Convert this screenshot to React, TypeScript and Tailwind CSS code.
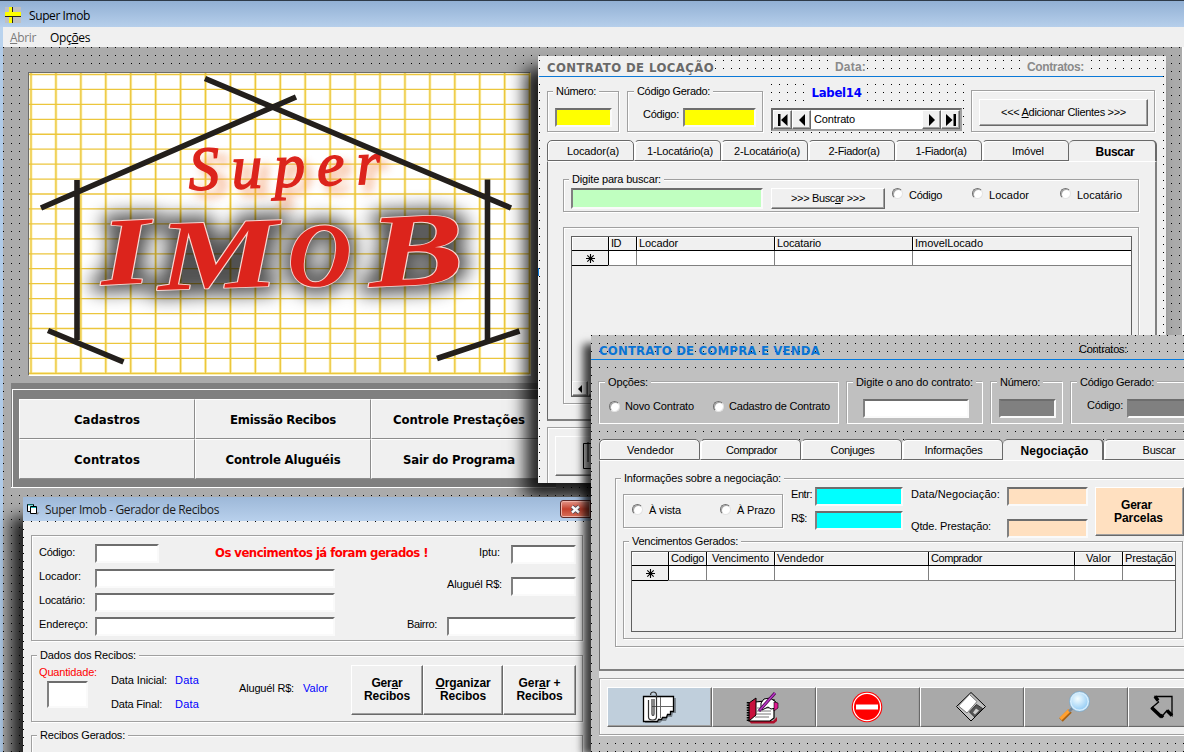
import { useLayoutEffect, useRef, useState, type ReactNode } from "react";

const SANS = "font-['Liberation_Sans',Arial,sans-serif]";
const TAHOMA = "font-['DejaVu_Sans_Condensed','DejaVu_Sans',sans-serif] [font-stretch:condensed] font-bold";
const SEGOE = "font-['Open_Sans','Noto_Sans',sans-serif]";
const DOTS =
  "bg-[conic-gradient(from_270deg_at_1px_1px,#000_90deg,transparent_0)] bg-size-[8px_8px]";

/* A label of fixed width: its letter spacing is adjusted so the caption fills it. */
function Txt({ w, className = "", children }: { w: number; className?: string; children: ReactNode }) {
  const ref = useRef<HTMLSpanElement>(null);
  const [spacing, setSpacing] = useState(0);
  useLayoutEffect(() => {
    const el = ref.current;
    if (!el) return;
    const n = (el.textContent ?? "").length;
    const now = el.getBoundingClientRect().width;
    setSpacing((s) => s + (w - now) / n);
  }, []);
  return (
    <span className={`block shrink-0 whitespace-nowrap leading-[13px] ${className}`}>
      <span ref={ref} className="inline-block" style={{ letterSpacing: `${spacing}px` }}>
        {children}
      </span>
    </span>
  );
}

function Frame({
  title,
  w = 0,
  className = "",
  legend = "ml-[5px]",
  gray = false,
  children,
}: {
  title?: string;
  w?: number;
  className?: string;
  legend?: string;
  gray?: boolean;
  children?: ReactNode;
}) {
  return (
    <div
      className={`flex shrink-0 flex-col items-start border ${
        gray
          ? "border-white bg-[#c0c0c0] shadow-[-1px_-1px_0_#a6a6a6]"
          : "border-[#a0a0a0] bg-[#f0f0f0] shadow-[1px_1px_0_#fff,inset_1px_1px_0_#fff]"
      } ${className}`}
    >
      {title && (
        <div className={`-mt-[7px] h-[13px] px-[3px] ${gray ? "bg-[#c0c0c0]" : "bg-[#f0f0f0]"} ${legend}`}>
          <Txt w={w}>{title}</Txt>
        </div>
      )}
      {children}
    </div>
  );
}

function Field({ className = "" }: { className?: string }) {
  return (
    <div
      className={`shrink-0 border-2 border-t-[#6d6d6d] border-l-[#808080] border-r-[#fafafa] border-b-[#fafafa] ${className}`}
    />
  );
}

function Button({ className = "", children }: { className?: string; children?: ReactNode }) {
  return (
    <button
      className={`flex shrink-0 items-center justify-center border border-t-white border-l-white border-r-[#696969] border-b-[#696969] shadow-[inset_-1px_-1px_0_#a0a0a0] ${className}`}
    >
      {children}
    </button>
  );
}

function Radio({ className = "" }: { className?: string }) {
  return (
    <span
      className={`block size-[11px] shrink-0 rounded-full border border-t-[#707070] border-l-[#707070] border-r-[#e3e3e3] border-b-[#e3e3e3] bg-white shadow-[inset_1px_1px_0_#a8a8a8] ${className}`}
    />
  );
}

function Tab({
  w,
  label,
  active = false,
  className = "",
}: {
  w: number;
  label: string;
  active?: boolean;
  className?: string;
}) {
  return (
    <div
      className={`flex shrink-0 justify-center rounded-t-[5px] border-t border-[#696969] bg-[#f0f0f0] ${
        active
          ? "h-[22px] border-r-2 pt-[5px] text-[12px] font-bold"
          : "h-[21px] border-r border-b border-l border-l-white pt-[4px] shadow-[inset_1px_1px_0_#fff]"
      } ${className}`}
    >
      <Txt w={w}>{label}</Txt>
    </div>
  );
}

type Col = { label?: string; w?: number; cls: string };

function DataGrid({ cols, className, children }: { cols: Col[]; className: string; children?: ReactNode }) {
  return (
    <div className={`flex shrink-0 flex-col border border-[#606060] bg-[#f0f0f0] ${className}`}>
      <div className="flex h-[14px] shrink-0 border-b border-black">
        {cols.map((c, i) => (
          <div
            key={i}
            className={`flex h-[13px] items-center overflow-hidden border-black shadow-[inset_1px_1px_0_#fff] ${c.cls} ${
              i < cols.length - 1 ? "border-r" : ""
            }`}
          >
            {c.label && <Txt w={c.w ?? 0}>{c.label}</Txt>}
          </div>
        ))}
      </div>
      <div className="flex h-[15px] shrink-0 border-b border-[#808080]">
        {cols.map((c, i) =>
          i === 0 ? (
            <div key={i} className={`relative flex items-center justify-center border-r border-black ${c.cls}`}>
              <svg width="9" height="9" viewBox="0 0 9 9" stroke="#000" strokeWidth="1.1">
                <path d="M4.5 0v9M0 4.5h9M1.3 1.3l6.4 6.4M7.7 1.3L1.3 7.7" />
              </svg>
              <span className="absolute -bottom-px left-0 h-px w-full bg-black" />
            </div>
          ) : (
            <div
              key={i}
              className={`bg-white ${c.cls} ${i < cols.length - 1 ? "border-r border-[#808080]" : ""}`}
            />
          ),
        )}
      </div>
      {children}
    </div>
  );
}

/* ---------- Logo ---------- */

const LETTERS = [
  { c: "I", x: 73, y: 212, sx: 1.35, r: -3, s: 96 },
  { c: "M", x: 130, y: 217, sx: 1.36, r: -2, s: 100 },
  { c: "O", x: 258, y: 212, sx: 0.95, r: 2, s: 92 },
  { c: "B", x: 341, y: 214, sx: 1.38, r: -3, s: 104 },
];

function Logo() {
  const vs = Array.from({ length: 21 }, (_, i) => 2 + i * 24.93);
  const hs = Array.from({ length: 21 }, (_, i) => 1.5 + i * 14.94);
  const letters = LETTERS.map((l) => (
    <text
      key={l.c}
      fontSize={l.s}
      transform={`translate(${l.x} ${l.y}) rotate(${l.r}) scale(${l.sx} 1)`}
    >
      {l.c}
    </text>
  ));
  return (
    <svg width="502" height="303" viewBox="0 0 502 303" className="block bg-white">
      <defs>
        <filter id="dark" x="-20%" y="-40%" width="140%" height="180%">
          <feGaussianBlur stdDeviation="9" />
        </filter>
        <filter id="glow" x="-20%" y="-40%" width="140%" height="180%">
          <feGaussianBlur stdDeviation="4" />
        </filter>
      </defs>
      <g stroke="#fbf0b4" strokeWidth="3">
        {vs.map((x) => (
          <path key={x} d={`M${x} 0V301`} />
        ))}
        <path d="M0 300.5H500" />
      </g>
      <g stroke="#ecc63c" strokeWidth="1.3">
        {vs.map((x) => (
          <path key={x} d={`M${x} 0V301`} />
        ))}
        {hs.map((y) => (
          <path key={y} d={`M0 ${y}H500`} />
        ))}
      </g>
      <g fontFamily="Liberation Serif, serif" fontWeight="bold" fontStyle="italic" strokeLinejoin="round">
        <g aria-hidden="true" fill="#000" stroke="#000" strokeWidth="15" opacity="0.68" filter="url(#dark)">
          {letters}
        </g>
        <g fill="#dc241c" stroke="#fbd9d4" strokeWidth="1.800" paintOrder="stroke">
          {letters}
        </g>
      </g>
      <g fontFamily="Liberation Serif, serif" fontStyle="italic" fontSize="62" transform="rotate(-2 160 114)">
        <text
          x="168"
          y="124"
          aria-hidden="true"
          textLength="190"
          lengthAdjust="spacing"
          fill="#f08040"
          stroke="#f08040"
          strokeWidth="4"
          opacity="0.42"
          filter="url(#glow)"
        >
          Super
        </text>
        <text
          x="160"
          y="117"
          textLength="192"
          lengthAdjust="spacing"
          fill="#dc241c"
          stroke="#dc241c"
          strokeWidth="1.500"
        >
          Super
        </text>
      </g>
      <g stroke="#231f1c" strokeWidth="5.6" fill="none">
        <path d="M176 5.5L482 135M12 135L267 24M48 107V267M458.500 106.500V267" />
        <path d="M19 257.500L94.500 289M408 285.500L490.500 258" />
      </g>
    </svg>
  );
}

/* ---------- Main menu panel ---------- */

const MENU = [
  [
    { t: "Cadastros", w: 66 },
    { t: "Emissão Recibos", w: 106 },
    { t: "Controle Prestações", w: 132 },
  ],
  [
    { t: "Contratos", w: 66 },
    { t: "Controle Aluguéis", w: 115 },
    { t: "Sair do Programa", w: 112 },
  ],
];

function MenuPanel() {
  return (
    <div className="mt-[7px] ml-[8px] flex h-[105px] w-[545px] shrink-0 flex-col border-b border-white bg-[#808080] pt-[6px]">
      <div className="ml-px flex flex-1 flex-col border-t border-l border-white pt-[9px] pl-[6px]">
        {MENU.map((row, r) => (
          <div key={r} className="flex">
            {row.map((b) => (
              <button
                key={b.t}
                className={`flex h-[40px] w-[176px] shrink-0 items-center justify-center border border-t-white border-l-white border-r-[#8c8c8c] border-b-[#8c8c8c] bg-[#f0f0f0] text-[13px] ${TAHOMA}`}
              >
                <Txt w={b.w}>{b.t}</Txt>
              </button>
            ))}
          </div>
        ))}
      </div>
    </div>
  );
}

/* ---------- Contrato de Locação ---------- */

const LEASE_TABS = [
  { l: "Locador(a)", w: 52 },
  { l: "1-Locatário(a)", w: 66 },
  { l: "2-Locatário(a)", w: 66 },
  { l: "2-Fiador(a)", w: 51 },
  { l: "1-Fiador(a)", w: 51 },
  { l: "Imóvel", w: 32 },
];

const NAV = "h-[19px] w-[19px] bg-[#f0f0f0]";

function LeaseWindow() {
  return (
    <section
      className={`absolute top-[56px] left-[538px] flex h-[427px] w-[628px] flex-col bg-[#f0f0f0] bg-position-[1px_4px] shadow-[-12px_13px_16px_1px_rgba(0,0,0,0.85)] ${DOTS}`}
    >
      <div className="flex h-[20px] shrink-0 items-start pt-[4px] pl-[9px]">
        <div className={`bg-[#f0f0f0] py-px text-[13px] text-[#696969] ${TAHOMA}`}>
          <Txt w={167}>CONTRATO DE LOCAÇÃO</Txt>
        </div>
        <div className="ml-[121px] bg-[#f0f0f0] py-px text-[12px] font-bold text-[#8a8a8a]">
          <Txt w={31}>Data:</Txt>
        </div>
        <div className="ml-[157px] bg-[#f0f0f0] px-1 py-px text-[12px] font-bold text-[#8a8a8a]">
          <Txt w={57}>Contratos:</Txt>
        </div>
      </div>
      <div className="mr-[3px] ml-px h-px shrink-0 bg-[#0a78d7]" />
      <div className="mr-[4px] ml-[3px] flex h-[406px] flex-col overflow-hidden bg-[#f0f0f0] pl-[6px]">
        <div className="flex h-[63px] shrink-0 items-start">
          <Frame title="Número:" w={40} className="mt-[14px] h-[41px] w-[72px]">
            <Field className="mt-[10px] ml-[7px] h-[19px] w-[57px] bg-[#ffff00]" />
          </Frame>
          <Frame title="Código Gerado:" w={73} legend="ml-[6px]" className="mt-[14px] ml-[8px] h-[41px] w-[136px]">
            <div className="mt-[10px] ml-[15px] flex items-start">
              <Txt w={36}>Código:</Txt>
              <Field className="ml-[4px] h-[19px] w-[73px] bg-[#ffff00]" />
            </div>
          </Frame>
          <div
            className={`mt-[5px] ml-[8px] flex h-[53px] w-[194px] shrink-0 flex-col bg-position-[0_2px] ${DOTS}`}
          >
            <div
              className={`ml-[36px] flex h-[20px] w-[59px] justify-center bg-[#f0f0f0] pt-[4px] text-[13px] text-[#0000ff] ${TAHOMA}`}
            >
              <Txt w={50}>Label14</Txt>
            </div>
            <div className="mt-[6px] flex h-[23px] w-[191px] items-center border-2 border-t-[#696969] border-l-[#696969] border-r-[#a0a0a0] border-b-[#a0a0a0] bg-white">
              <Button className={NAV}>
                <svg width="12" height="12" viewBox="0 0 12 12">
                  <path d="M1 0h2.500v12H1zM10.500 0v12L4 6z" />
                </svg>
              </Button>
              <Button className={NAV}>
                <svg width="12" height="12" viewBox="0 0 12 12">
                  <path d="M9 0v12L3 6z" />
                </svg>
              </Button>
              <Txt w={41} className="ml-[3px] flex-1">
                Contrato
              </Txt>
              <Button className={NAV}>
                <svg width="12" height="12" viewBox="0 0 12 12">
                  <path d="M3 0v12l6-6z" />
                </svg>
              </Button>
              <Button className={NAV}>
                <svg width="12" height="12" viewBox="0 0 12 12">
                  <path d="M1 0v12l6.500-6zM8.500 0H11v12H8.500z" />
                </svg>
              </Button>
            </div>
          </div>
          <Frame className="mt-[13px] ml-[6px] h-[42px] w-[184px]">
            <Button className="mt-[8px] ml-[7px] h-[27px] w-[169px] bg-[#f0f0f0]">
              <Txt w={125}>
                &lt;&lt;&lt; <u>A</u>dicionar Clientes &gt;&gt;&gt;
              </Txt>
            </Button>
          </Frame>
        </div>
        <div className="flex h-[21px] shrink-0 items-start">
          {LEASE_TABS.map((t) => (
            <Tab key={t.l} w={t.w} label={t.l} className="w-[87px] pl-[5px] first:border-l-[#696969]" />
          ))}
          <Tab w={39} label="Buscar" active className="w-[88px] pl-[6px]" />
        </div>
        <div className="flex h-[260px] w-[610px] shrink-0 flex-col border-t border-r-2 border-b-2 border-l border-t-white border-r-[#808080] border-b-[#808080] border-l-[#696969] pl-[15px]">
          <Frame title="Digite para buscar:" w={89} className="mt-[17px] h-[33px] w-[576px]">
            <div className="mt-[2px] ml-[7px] flex items-start">
              <Field className="h-[21px] w-[192px] bg-[#c0ffc0]" />
              <Button className="ml-[8px] h-[21px] w-[114px] bg-[#f0f0f0]">
                <Txt w={74}>
                  &gt;&gt;&gt; Busc<u>a</u>r &gt;&gt;&gt;
                </Txt>
              </Button>
              <Radio className="ml-[7px]" />
              <Txt w={33} className="mt-px ml-[6px]">
                Código
              </Txt>
              <Radio className="ml-[30px]" />
              <Txt w={40} className="mt-px ml-[6px]">
                Locador
              </Txt>
              <Radio className="ml-[31px]" />
              <Txt w={45} className="mt-px ml-[6px]">
                Locatário
              </Txt>
            </div>
          </Frame>
          <Frame className="mt-[15px] h-[177px] w-[576px]">
            <DataGrid
              className="mt-[8px] ml-[7px] h-[161px] w-[561px]"
              cols={[
                { cls: "w-[37px]" },
                { label: "ID", w: 10, cls: "w-[28px] pl-[2px]" },
                { label: "Locador", w: 39, cls: "w-[138px] pl-[2px]" },
                { label: "Locatario", w: 44, cls: "w-[138px] pl-[2px]" },
                { label: "ImovelLocado", w: 68, cls: "flex-1 pl-[2px]" },
              ]}
            >
              <div className="mt-auto flex h-[15px]">
                <Button className="h-[15px] w-[16px] bg-[#f0f0f0]">
                  <svg width="6" height="8" viewBox="0 0 6 8">
                    <path d="M5 0v8L1 4z" />
                  </svg>
                </Button>
                <Button className="h-[15px] w-[90px] bg-[#f0f0f0]" />
              </div>
            </DataGrid>
          </Frame>
        </div>
        <Frame className="mt-[6px] h-[70px] w-[609px]">
          <Button className="mt-[8px] ml-[7px] h-[40px] w-[104px] bg-[#f0f0f0]">
            <svg width="48" height="28" viewBox="0 0 48 28" fill="none" stroke="#000">
              <path d="M0.500 1.500h24v25h-24zM5 0v20" />
            </svg>
          </Button>
        </Frame>
      </div>
      <span className="absolute top-[212px] left-0 h-[8px] w-px bg-[#0a78d7]" />
    </section>
  );
}

/* ---------- Gerador de Recibos ---------- */

const W = "bg-white";
const BOLDBTN = "h-[50px] flex-col bg-[#f0f0f0] text-[12px] font-bold";

function ReceiptWindow() {
  return (
    <section className="absolute top-[497px] left-[23px] flex h-[255px] w-[568px] flex-col bg-[#f0f0f0] shadow-[-10px_22px_14px_2px_rgba(0,0,0,0.8)]">
      <header
        className={`flex h-[24px] shrink-0 items-center bg-linear-to-b from-[#9db8d8] to-[#b8d0ec] pl-[4px] text-[12px] text-[#1c1c1c] ${SEGOE}`}
      >
        <svg width="13" height="12" viewBox="0 0 13 12" stroke="#000">
          <path d="M8 9.500h4.500L10 12z" fill="#888" stroke="none" />
          <path d="M0.500 1.500h6v7h-6z" fill="#fff" />
          <path d="M3.500 3.500h6v7h-6z" fill="#fff" />
          <path d="M1 2h5M4 4.500h5" stroke="#1bb" />
        </svg>
        <Txt w={174} className="ml-[5px]">
          Super Imob - Gerador de Recibos
        </Txt>
        <div className="mt-[3px] ml-auto flex h-[18px] w-[31px] items-center justify-center self-start rounded-l-[3px] border border-[#5c2a28] bg-linear-to-b from-[#e2968a] via-[#c4402c] via-50% to-[#d8705a] shadow-[inset_0_0_0_1px_#efb3a8]">
          <svg width="11" height="9" viewBox="0 0 11 9">
            <path d="M2 1.500l7 6M9 1.500l-7 6" stroke="#4a4a5a" strokeWidth="4" />
            <path d="M2 1.500l7 6M9 1.500l-7 6" stroke="#fff" strokeWidth="2.400" />
          </svg>
        </div>
      </header>
      <div className={`flex flex-1 overflow-hidden pt-[2px] pl-[2px] ${DOTS}`}>
        <div className="flex flex-1 flex-col bg-[#f0f0f0] pl-[6px]">
          <Frame className="mt-[12px] h-[106px] w-[552px]">
            <div className="flex w-full">
              <div className="flex w-[304px] shrink-0 flex-col">
                <div className="mt-[8px] ml-[7px] flex h-[24px] items-start">
                  <Txt w={36} className="mt-[2px] w-[56px]">
                    Código:
                  </Txt>
                  <Field className={`h-[19px] w-[64px] ${W}`} />
                  <div className={`ml-[56px] text-[13px] text-[#ff0000] ${TAHOMA}`}>
                    <Txt w={213} className="mt-[2px]">
                      Os vencimentos já foram gerados !
                    </Txt>
                  </div>
                </div>
                {[
                  { l: "Locador:", w: 42 },
                  { l: "Locatário:", w: 46 },
                  { l: "Endereço:", w: 49 },
                ].map((f) => (
                  <div key={f.l} className="ml-[7px] flex h-[24px] items-start">
                    <Txt w={f.w} className="mt-[2px] w-[56px]">
                      {f.l}
                    </Txt>
                    <Field className={`mt-px h-[19px] w-[240px] ${W}`} />
                  </div>
                ))}
              </div>
              <div className="flex flex-1 flex-col items-end pr-[6px]">
                <div className="mt-[9px] flex h-[32px] items-start">
                  <Txt w={21} className="mt-px mr-[11px]">
                    Iptu:
                  </Txt>
                  <Field className={`h-[19px] w-[65px] ${W}`} />
                </div>
                <div className="flex h-[40px] items-start">
                  <Txt w={55} className="mt-px mr-[9px]">
                    Aluguél R$:
                  </Txt>
                  <Field className={`h-[19px] w-[65px] ${W}`} />
                </div>
                <div className="flex items-start">
                  <Txt w={30} className="mt-px mr-[10px]">
                    Bairro:
                  </Txt>
                  <Field className={`h-[19px] w-[129px] ${W}`} />
                </div>
              </div>
            </div>
          </Frame>
          <Frame title="Dados dos Recibos:" w={96} className="mt-[14px] h-[67px] w-[552px]">
            <div className="ml-[7px] flex items-start">
              <div className="mt-[4px] w-[72px] shrink-0 text-[#ff0000]">
                <Txt w={58}>Quantidade:</Txt>
                <Field className={`mt-[2px] ml-[8px] h-[27px] w-[41px] ${W}`} />
              </div>
              <div className="mt-[12px] w-[128px] shrink-0">
                <div className="flex h-[24px]">
                  <Txt w={56} className="w-[64px]">
                    Data Inicial:
                  </Txt>
                  <Txt w={24} className="text-[#0000ff]">
                    Data
                  </Txt>
                </div>
                <div className="flex">
                  <Txt w={51} className="w-[64px]">
                    Data Final:
                  </Txt>
                  <Txt w={24} className="text-[#0000ff]">
                    Data
                  </Txt>
                </div>
              </div>
              <Txt w={55} className="mt-[20px] w-[64px]">
                Aluguél R$:
              </Txt>
              <Txt w={25} className="mt-[20px] w-[48px] text-[#0000ff]">
                Valor
              </Txt>
              <div className="mt-[3px] flex">
                <Button className={`w-[72px] ${BOLDBTN}`}>
                  <Txt w={31}>
                    Ger<u>a</u>r
                  </Txt>
                  <Txt w={46}>Recibos</Txt>
                </Button>
                <Button className={`w-[80px] ${BOLDBTN}`}>
                  <Txt w={55}>
                    <u>O</u>rganizar
                  </Txt>
                  <Txt w={46}>Recibos</Txt>
                </Button>
                <Button className={`w-[73px] ${BOLDBTN}`}>
                  <Txt w={42}>
                    Ger<u>a</u>r +
                  </Txt>
                  <Txt w={46}>Recibos</Txt>
                </Button>
              </div>
            </div>
          </Frame>
          <Frame title="Recibos Gerados:" w={85} className="mt-[13px] h-[40px] w-[552px]" />
        </div>
      </div>
    </section>
  );
}

/* ---------- Contrato de Compra e Venda ---------- */

const SALE_TABS = [
  { l: "Vendedor", w: 47 },
  { l: "Comprador", w: 51 },
  { l: "Conjuges", w: 44 },
  { l: "Informações", w: 58 },
];

function PaperIcon() {
  return (
    <svg width="34" height="32" viewBox="0 0 34 32" fill="none" className="mr-[2px]">
      <path d="M3 7h31v15h-3l-1 4h-4l-2 4h-4l-2 2H3z" fill="#7d8790" />
      <path d="M1.500 5.500h30v15h-3v3h-3l-1 3h-4l-1 2h-3l-1 2h-14z" fill="#fff" stroke="#000" strokeWidth="1.300" />
      <path d="M10 15.500h21M18.500 6v21" stroke="#666" />
      <path
        d="M6.500 9V26c0 4 8 4 8 0V4c0-4-6-4-6 0M10 8v15c0 2 2 2 2 0V8"
        stroke="#333"
        strokeWidth="1.200"
      />
    </svg>
  );
}

function NotebookIcon() {
  return (
    <svg width="34" height="33" viewBox="0 0 34 33" className="mr-[2px]">
      <path d="M3 30h24l4-4v4l-3 2.500H5z" fill="#b0102c" />
      <path d="M9 11l19-2v18l-4 3H3z" fill="#fff" stroke="#000" strokeWidth="1.200" />
      <path d="M3 12l7-5v17l-7 6z" fill="#c8103c" stroke="#000" />
      <path d="M2 11v19" stroke="#000" strokeWidth="2.500" strokeDasharray="1.500 1" />
      <path d="M11 17h12M11 20h14M10 23h15M9 26h14" stroke="#777" />
      <path d="M15 12l3-4 6-1 6 4v6l-5 1-3-2-6 3-1-3z" fill="#fff" stroke="#000" />
      <path d="M28 11l4 1v5l-4 3z" fill="#e01890" stroke="#000" strokeWidth="0.600" />
      <path d="M13 20L29 2" stroke="#500050" strokeWidth="3" />
      <path d="M13.500 19.500L29 2" stroke="#b838c8" strokeWidth="1.400" />
    </svg>
  );
}

function NoEntryIcon() {
  return (
    <svg width="32" height="32" viewBox="0 0 32 32" className="mr-[3px]">
      <circle cx="16" cy="16" r="15.300" fill="#f00" />
      <circle cx="16" cy="16" r="13.600" fill="#f00" stroke="#fff" strokeWidth="1.200" />
      <path d="M5 13.500h22v5H5z" fill="#fff" />
    </svg>
  );
}

function FloppyIcon() {
  return (
    <svg width="32" height="32" viewBox="0 0 32 32" stroke="#000" className="mr-[3px]">
      <path d="M16 1.500L30.500 15.500 16 30 1.500 15.500z" fill="#c0c0c0" />
      <path d="M14.500 3.500L22 10.500 12 22 3.500 15z" fill="#fff" stroke="#777" />
      <path d="M21.500 13.500l6 4-8 8.500-5-5z" fill="#555" stroke="#333" />
      <path d="M21 17.500l3 2-4 4-2-2z" fill="#ccc" stroke="none" />
    </svg>
  );
}

function MagnifierIcon() {
  return (
    <svg width="34" height="32" viewBox="0 0 34 32" className="mr-[3px]">
      <defs>
        <radialGradient id="lens" cx="0.400" cy="0.350" r="0.700">
          <stop offset="0" stopColor="#f4fdff" />
          <stop offset="1" stopColor="#8cc8f4" />
        </radialGradient>
      </defs>
      <path d="M3 29L12 20" stroke="#a86010" strokeWidth="5" />
      <path d="M2.500 28L11.500 19.300" stroke="#ffa030" strokeWidth="3.400" />
      <path d="M11 20.500l4-4" stroke="#789" strokeWidth="2.500" />
      <circle cx="21.500" cy="10.500" r="9" fill="url(#lens)" stroke="#d4ecfc" strokeWidth="2" />
      <circle cx="21.500" cy="10.500" r="10" fill="none" stroke="#6ba4cc" strokeWidth="0.700" />
    </svg>
  );
}

function ExitIcon() {
  return (
    <svg width="26" height="26" viewBox="0 0 26 26">
      <path d="M6 2.500h17v19l-5-5-6 7L2.500 14l7-6z" fill="#a9a9a9" stroke="#000" strokeWidth="1.300" />
      <path d="M23 21.500l-5-5M2.500 13.500l9.500 9M12 23l2-2M6 2.500l3 4" stroke="#000" strokeWidth="3.500" />
    </svg>
  );
}

const TOOL = "h-[40px] w-[104px] bg-[#a9a9a9]";
const PEACH = "bg-[#ffe0c0]";

function SaleWindow() {
  return (
    <section
      className={`absolute top-[335px] left-[591px] flex h-[417px] w-[593px] flex-col overflow-hidden bg-[#c0c0c0] ${DOTS}`}
    >
      <div className="flex h-[24px] shrink-0 items-start pl-[8px]">
        <div className={`mt-[9px] text-[13px] text-[#0a74d4] ${TAHOMA}`}>
          <Txt w={221}>CONTRATO DE COMPRA E VENDA</Txt>
        </div>
        <Txt w={48} className="mt-[8px] ml-[259px]">
          Contratos:
        </Txt>
      </div>
      <div className="h-[1px] w-full shrink-0 bg-[#007ae0]" />
      <div className="mt-[10px] ml-[6px] flex h-[55px] shrink-0 items-start bg-[#c0c0c0] pt-[12px] pl-[2px]">
        <Frame gray title="Opções:" w={40} className="h-[42px] w-[240px]">
          <div className="mt-[11px] ml-[9px] flex items-center">
            <Radio />
            <Txt w={69} className="ml-[5px]">
              Novo Contrato
            </Txt>
            <Radio className="ml-[19px]" />
            <Txt w={101} className="ml-[5px]">
              Cadastro de Contrato
            </Txt>
          </div>
        </Frame>
        <Frame gray title="Digite o ano do contrato:" w={117} className="ml-[8px] h-[42px] w-[136px]">
          <Field className="mt-[10px] ml-[15px] h-[19px] w-[106px] bg-white" />
        </Frame>
        <Frame gray title="Número:" w={40} className="ml-[8px] h-[42px] w-[72px]">
          <Field className="mt-[10px] ml-[7px] h-[19px] w-[57px] bg-[#808080]" />
        </Frame>
        <Frame gray title="Código Gerado:" w={74} className="ml-[8px] h-[42px] w-[140px]">
          <div className="mt-[10px] ml-[15px] flex items-start">
            <Txt w={36}>Código:</Txt>
            <Field className="ml-[4px] h-[19px] w-[73px] bg-[#808080]" />
          </div>
        </Frame>
      </div>
      <div className="mt-[14px] ml-[8px] flex h-[21px] shrink-0 items-start">
        {SALE_TABS.map((t) => (
          <Tab key={t.l} w={t.w} label={t.l} className="w-[101px] pl-[2px] first:border-l-[#696969]" />
        ))}
        <Tab w={68} label="Negociação" active className="w-[101px] pl-[4px]" />
        <Tab w={33} label="Buscar" className="w-[110px]" />
      </div>
      <div className="ml-[8px] flex h-[211px] shrink-0 flex-col border-t border-b-2 border-l border-t-white border-b-[#808080] border-l-[#696969] bg-[#f0f0f0] pl-[15px]">
        <Frame title="Informações sobre a negociação:" w={157} className="mt-[17px] h-[169px] w-[640px]">
          <div className="ml-[7px] flex h-[51px] items-start">
            <Frame className="mt-[9px] h-[34px] w-[160px]">
              <div className="mt-[9px] ml-[8px] flex items-start">
                <Radio />
                <Txt w={32} className="ml-[6px]">
                  À vista
                </Txt>
                <Radio className="ml-[39px]" />
                <Txt w={38} className="ml-[6px]">
                  À Prazo
                </Txt>
              </div>
            </Frame>
            <div className="mt-[2px] ml-[8px] w-[120px] shrink-0">
              {[
                { l: "Entr:", w: 21 },
                { l: "R$:", w: 16 },
              ].map((f) => (
                <div key={f.l} className="flex h-[24px] items-start">
                  <Txt w={f.w} className="mt-px w-[24px]">
                    {f.l}
                  </Txt>
                  <Field className="h-[19px] w-[88px] bg-[#00ffff]" />
                </div>
              ))}
            </div>
            <div className="mt-[2px] w-[184px] shrink-0">
              {[
                { l: "Data/Negociação:", w: 89 },
                { l: "Qtde. Prestação:", w: 80 },
              ].map((f) => (
                <div key={f.l} className="flex h-[32px] items-start">
                  <Txt w={f.w} className="mt-px w-[96px]">
                    {f.l}
                  </Txt>
                  <Field className={`h-[19px] w-[81px] ${PEACH}`} />
                </div>
              ))}
            </div>
            <Button className={`mt-[2px] h-[49px] w-[89px] flex-col text-[12px] font-bold ${PEACH}`}>
              <Txt w={31} className="mr-[6px]">
                Gerar
              </Txt>
              <Txt w={49} className="mr-[2px]">
                Parcelas
              </Txt>
            </Button>
          </div>
          <Frame title="Vencimentos Gerados:" w={106} className="mt-[5px] ml-[7px] h-[98px] w-[560px]">
            <DataGrid
              className="mt-[3px] ml-[7px] h-[81px] w-[545px]"
              cols={[
                { cls: "w-[37px]" },
                { label: "Codigo", w: 33, cls: "w-[38px] pl-[2px]" },
                { label: "Vencimento", w: 57, cls: "w-[68px] pl-[5px]" },
                { label: "Vendedor", w: 47, cls: "w-[154px] pl-[2px]" },
                { label: "Comprador", w: 51, cls: "w-[146px] pl-[2px]" },
                { label: "Valor", w: 25, cls: "w-[48px] pl-[11px]" },
                { label: "Prestação", w: 48, cls: "w-[52px] pl-[2px]" },
              ]}
            />
          </Frame>
        </Frame>
      </div>
      <div className="ml-[8px] flex h-[65px] shrink-0 flex-col bg-[#f0f0f0] pt-[7px]">
        <Frame className="h-[57px] w-[660px]">
          <div className="mt-[8px] ml-[7px] flex">
            <Button className="h-[40px] w-[105px] bg-[#c0cfdc]">
              <PaperIcon />
            </Button>
            <Button className={TOOL}>
              <NotebookIcon />
            </Button>
            <Button className={TOOL}>
              <NoEntryIcon />
            </Button>
            <Button className={TOOL}>
              <FloppyIcon />
            </Button>
            <Button className={TOOL}>
              <MagnifierIcon />
            </Button>
            <Button className={`${TOOL} pr-[36px]`}>
              <ExitIcon />
            </Button>
          </div>
        </Frame>
      </div>
    </section>
  );
}

/* ---------- Application ---------- */

export default function App() {
  return (
    <main
      className={`relative flex h-[752px] w-[1184px] flex-col overflow-hidden border-t border-[#2e3a48] bg-[#f0f0f0] text-[11px] text-black ${SANS}`}
    >
      <header
        className={`flex h-[26px] shrink-0 items-center bg-linear-to-b from-[#92b0d4] to-[#b6cfeb] pt-[3px] pl-[5px] text-[12px] ${SEGOE}`}
      >
        <svg width="16" height="16" viewBox="0 0 16 16" className="-mt-[2px]">
          <path d="M0 0h16v16H0z" fill="#c0c0c0" />
          <path d="M4 0h4v16H4zM0 5h16v4H0z" fill="#ffff00" />
          <path d="M7.500 0v5M7.500 9.500v6.500M0 9.500h16" stroke="#222" />
        </svg>
        <Txt w={61} className="ml-[8px]">
          Super Imob
        </Txt>
      </header>
      <nav className={`flex h-[20px] shrink-0 items-center border-l-[3px] border-[#b9d3ee] pl-[7px] text-[12px] ${SEGOE}`}>
        <Txt w={26} className="text-[#7c7c7c]">
          <u>A</u>brir
        </Txt>
        <Txt w={40} className="ml-[14px]">
          Opç<u>õ</u>es
        </Txt>
      </nav>
      <div className="flex flex-1 border-r-2 border-l-[3px] border-r-white border-l-[#b0cbe8]">
        <div className={`flex flex-1 flex-col bg-[#ababab] ${DOTS}`}>
          <div className="mt-[18px] ml-[18px] flex h-[318px] w-[511px] shrink-0 flex-col bg-[#ababab] pt-[7px] pl-[7px]">
            <div className="h-[304px] w-[503px] border-t border-r border-b border-l border-t-[#6b6b6b] border-r-white border-b-white border-l-[#6b6b6b]">
              <Logo />
            </div>
          </div>
          <div className="-mt-[7px] flex flex-col">
            <MenuPanel />
          </div>
        </div>
      </div>
      <div className="absolute -top-px left-0 h-[752px] w-[1184px]">
        <LeaseWindow />
        <ReceiptWindow />
        <span className="absolute top-[343px] left-[591px] block h-[409px] w-[40px] shadow-[-7px_2px_8px_1px_rgba(0,0,0,0.75)]" />
        <SaleWindow />
      </div>
    </main>
  );
}
